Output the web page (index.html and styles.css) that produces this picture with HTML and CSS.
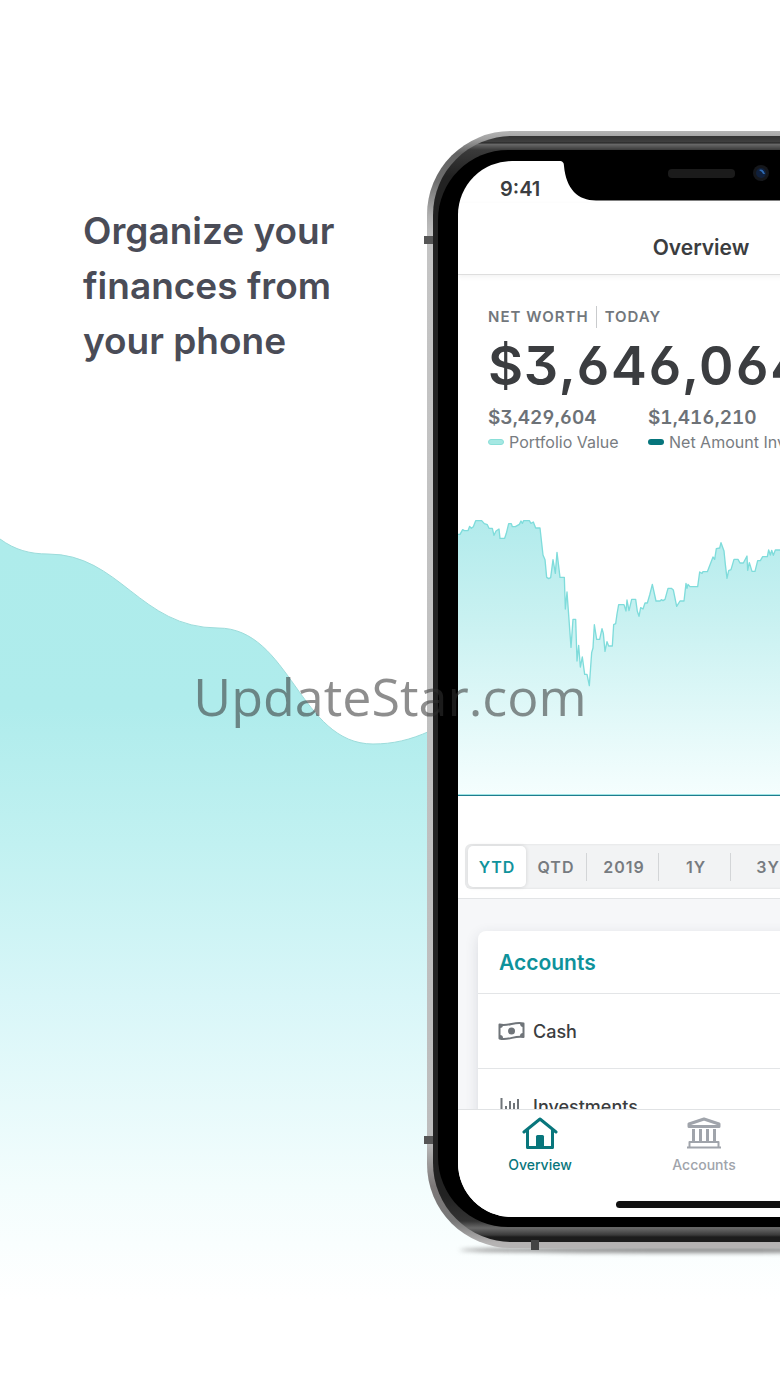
FILE: index.html
```html
<!DOCTYPE html>
<html lang="en">
<head>
    <meta charset="utf-8" />
    <meta name="viewport" content="width=device-width, initial-scale=1" />
    <title>Organize your finances from your phone</title>
    <link rel="stylesheet" href="styles.css">
</head>
<body>
    <main class="page">
        <svg class="wave" viewBox="0 0 780 1387" preserveAspectRatio="xMinYMin slice" aria-hidden="true">
            <defs>
                <linearGradient id="wavefill" gradientUnits="userSpaceOnUse" x1="0" y1="540" x2="0" y2="1300">
                    <stop offset="0" stop-color="#aeeceb" />
                    <stop offset="0.22" stop-color="#afecec" />
                    <stop offset="0.4" stop-color="#c1f1f1" />
                    <stop offset="0.6" stop-color="#d8f6f8" />
                    <stop offset="0.85" stop-color="#f3fdfd" />
                    <stop offset="1" stop-color="#ffffff" />
                </linearGradient>
            </defs>
            <path d="M0 539C15 550 30 554 48 554C120 554 140 628 218 628C290 628 300 744 373 744C393 744 410 740 430 731C500 700 600 640 780 640V1387H0Z" fill="url(#wavefill)" />
            <path d="M0 539C15 550 30 554 48 554C120 554 140 628 218 628C290 628 300 744 373 744C393 744 410 740 430 731" fill="none" stroke="#9ddcdb" stroke-width="1" />
        </svg>

        <div class="content">
            <h1 class="headline">Organize your<br>finances from<br>your phone</h1>

            <div class="device">
                <span class="band band-top"></span>
                <span class="band band-side"></span>
                <span class="band band-bottom"></span>
                <div class="rim">
                    <div class="edge">
                        <div class="bezel">
                            <div class="screen">
                                <svg class="notch" viewBox="0 0 284 40" aria-hidden="true">
                                    <path d="M0 0H284C280 0 279 2 279 5C277 28 265 39.500 247 39.500H37C19 39.500 7 28 5 5C5 2 4 0 0 0Z" fill="#000" />
                                    <rect x="109" y="8" width="67" height="9" rx="4" fill="#1b1b1b" />
                                    <circle cx="202" cy="12" r="8" fill="#15171b" />
                                    <circle cx="202" cy="12" r="5" fill="#10203c" />
                                    <path d="M200 9Q204 7 206 13Q203 13 203 11Z" fill="#2f6cb5" />
                                </svg>
                                <div class="status">9:41</div>
                                <header class="titlebar">
                                    <h2>Overview</h2>
                                </header>

                                <div class="scroll">
                                    <section class="summary">
                                        <div class="caption"><span>NET WORTH</span><span class="today">TODAY</span></div>
                                        <div class="total">$3,646,064</div>
                                        <div class="figures">
                                            <div class="figure">
                                                <strong>$3,429,604</strong>
                                                <span class="legend"><i class="key key-light"></i>Portfolio Value</span>
                                            </div>
                                            <div class="figure">
                                                <strong>$1,416,210</strong>
                                                <span class="legend"><i class="key key-dark"></i>Net Amount Invested</span>
                                            </div>
                                        </div>
                                    </section>

                                    <svg class="chart" viewBox="24 45 1458 840" aria-hidden="true">
                                        <defs>
                                            <linearGradient id="chartfill" x1="0" y1="0" x2="0" y2="1">
                                                <stop offset="0" stop-color="#b2ebec" />
                                                <stop offset="0.35" stop-color="#c8f1f1" />
                                                <stop offset="1" stop-color="#f5fefe" />
                                            </linearGradient>
                                        </defs>
                                        <path d="M20 103H30L38 89L43 92H54L59 79L64 85L70 80L77 62H95L103 71L112 74L117 85H127L132 106L138 93L147 87L150 115H164L169 100L176 71H184L187 80H196L208 73L213 63L217 70L221 62H238L243 70L250 66L257 84H270L279 165L285 179L290 232L296 236L302 233L309 179L316 220L321 157L330 232H343L346 327L351 276L363 442L369 358H377L381 483L386 436L391 501L397 471L404 523H411L418 557L425 458L429 444L433 374L440 418H449L456 386L460 400L465 454L471 425L476 438H487L491 374L497 371L501 342L506 314H522L528 333L531 300L537 332L545 298H557L562 334L567 349L572 323L579 327L585 309H592L599 285L607 253L618 303H630L634 299L639 302L645 298L654 265H664L670 270L680 319L690 303H702L708 250L711 265L714 253L720 260H743L749 216L756 220L759 215H772L789 171L794 178L799 146L809 144L813 128L822 153L826 193L831 235L836 212L843 209L852 178H864L870 189H880L891 168L893 211L898 188L906 214H915L923 182H931L938 170H952L956 150L961 165L965 151L970 166L976 150H990L1000 160L1020 130L1040 150L1070 120L1100 140L1140 100L1180 125L1230 95L1280 110L1340 80L1400 95L1490 70V885H20Z" fill="url(#chartfill)" stroke="#7fdcdb" stroke-width="4" stroke-linejoin="round" />
                                    </svg>

                                    <nav class="ranges" aria-label="Time range">
                                        <button type="button" class="range active">YTD</button>
                                        <button type="button" class="range">QTD</button>
                                        <button type="button" class="range wide">2019</button>
                                        <button type="button" class="range wide">1Y</button>
                                        <button type="button" class="range wide">3Y</button>
                                    </nav>

                                    <section class="lower">
                                        <div class="card">
                                            <h3>Accounts</h3>
                                            <div class="row">
                                                <svg width="27" height="20" viewBox="0 0 27 20" aria-hidden="true">
                                                    <path d="M1.500 3.500C10 6 17 0 25.500 2.500V16C17 14 10 20 1.500 17.500Z" fill="none" stroke="#6f7479" stroke-width="2" stroke-linejoin="round" />
                                                    <path d="M2 4H5Q5 7 2 7ZM2 14Q5 14 5 17H2ZM25 2H22Q22 6 25 6ZM25 12Q22 12 22 15H25Z" fill="#6f7479" />
                                                    <circle cx="13.500" cy="10" r="3.500" fill="#6f7479" />
                                                </svg>
                                                Cash
                                            </div>
                                            <div class="row">
                                                <svg width="27" height="20" viewBox="0 0 27 20" aria-hidden="true">
                                                    <path d="M3.500 2V18H21M8 10V16M12 5V16M16 7V16M20 3V16" fill="none" stroke="#6f7479" stroke-width="2" />
                                                </svg>
                                                Investments
                                            </div>
                                        </div>
                                    </section>
                                </div>

                                <nav class="tabs" aria-label="Sections">
                                    <a href="#overview" class="tab current">
                                        <svg width="36" height="34" viewBox="0 0 36 34" aria-hidden="true">
                                            <path d="M2 16L18 3L34 16M5.500 14V31.500H30.500V14" fill="none" stroke="currentColor" stroke-width="3" stroke-linecap="round" stroke-linejoin="round" />
                                            <path d="M14 31V20.500Q14 19 15.500 19H20.500Q22 19 22 20.500V31Z" fill="currentColor" />
                                        </svg>
                                        Overview
                                    </a>
                                    <a href="#accounts" class="tab">
                                        <svg width="36" height="34" viewBox="0 0 36 34" aria-hidden="true">
                                            <path d="M3 10.500V8L18 3L33 8V10.500Z" fill="none" stroke="currentColor" stroke-width="3" stroke-linejoin="round" />
                                            <path d="M7.500 13V25.500M14.500 13V25.500M21.500 13V25.500M28.500 13V25.500" stroke="currentColor" stroke-width="3" />
                                            <path d="M3.500 31V26H32.500V31M1 31.500H35" fill="none" stroke="currentColor" stroke-width="2" stroke-linejoin="round" />
                                        </svg>
                                        Accounts
                                    </a>
                                </nav>
                                <div class="homebar"></div>
                            </div>
                        </div>
                    </div>
                </div>
            </div>
        </div>

        <div class="watermark">UpdateStar.com</div>
    </main>
</body>
</html>
```

FILE: styles.css
```css
*{
    box-sizing:border-box;
}
body{
    margin:0;
    background-color:white;
    font-family:Inter, "Liberation Sans", sans-serif;
    color:#3b3d40;
}
h1,h2,h3{
    margin:0;
    font-weight:600;
}
/* backdrop, content and watermark share one grid cell */
.page{
    display:grid;
    grid-template-columns:minmax(0, 1fr);
    overflow:hidden;
}
.wave,.content,.watermark{
    grid-area:1 / 1;
}
.wave{
    width:100%;
    height:100%;
}
.content{
    display:grid;
    grid-template-columns:427px minmax(0, 1fr);
    align-items:start;
    padding:131px 0 139px;
    isolation:isolate;
}
.headline{
    padding:72px 0 0 83px;
    font-size:37px;
    line-height:55px;
    color:#4a4c57;
}
.watermark{
    place-self:center;
    z-index:1;
    padding-top:4px;
    font:52px/72px "Open Sans", "Noto Sans", sans-serif;
    color:rgba(50,50,50,0.55);
    pointer-events:none;
}

/* phone body */
.device{
    position:relative;
    width:548px;
}
.device::after{
    content:"";
    position:absolute;
    left:32px;
    right:32px;
    bottom:-5px;
    height:6px;
    border-radius:50%;
    background-color:#8c8c8c;
    filter:blur(2px);
    z-index:-1;
}
.rim{
    padding:5px 6px 6px;
    border-radius:84px;
    background:linear-gradient(#b4b4b4, #a0a0a0 8px, #636363 22px, #6e6e6e 50px, #b0b0b0 85px, #c4c4c4 110px, #bdbdbd 1010px, #7c7878 1055px, #777 1090px, #b5b3b3 1112px);
}
.edge{
    padding:14px 5px 15px;
    border-radius:79px;
    background:linear-gradient(#333, #3f3f3f 6px, #222 7px, #6a6a6a 8px, #3a3a3a 14px, #222 40px, #222 1060px, #333 1085px, #6a6a6a 1092px, #3a3a3a 1099px, #1c1c1c 1101px);
}
.bezel{
    padding:11px 20px 10px;
    border-radius:70px;
    background-color:black;
}
.band{
    position:absolute;
    background-color:#555;
}
.band-top,.band-side{
    left:-3px;
    width:9px;
    height:8px;
}
.band-top{
    top:105px;
}
.band-side{
    top:1005px;
}
.band-bottom{
    left:104px;
    bottom:-2px;
    width:8px;
    height:10px;
    background-color:#444;
    z-index:1;
}

/* screen */
.screen{
    position:relative;
    display:flex;
    flex-direction:column;
    aspect-ratio:486 / 1056;
    border-radius:54px;
    background-color:white;
    overflow:hidden;
}
.notch{
    position:absolute;
    top:0;
    left:101px;
    width:284px;
    height:40px;
}
.status{
    padding:14px 42px 0;
    font-size:20px;
    font-weight:600;
    line-height:28px;
}
.titlebar{
    padding:30px 0 12px;
    text-align:center;
    border-bottom:1px solid #dedede;
    box-shadow:0 2px 5px rgba(0,0,0,0.05);
}
.titlebar h2{
    font-size:21px;
    line-height:29px;
}
.scroll{
    flex:1;
    min-height:0;
    overflow:hidden;
}
.summary{
    padding:31px 0 0 30px;
}
.caption{
    display:flex;
    font-size:15px;
    font-weight:600;
    line-height:22px;
    letter-spacing:1px;
    color:#72777c;
}
.today{
    margin-left:7px;
    padding-left:8px;
    border-left:1px solid #c9cbcd;
}
.total,.figure strong{
    font-weight:600;
    font-feature-settings:"cv03","cv04","cv09","tnum";
}
.total{
    font-size:54px;
    line-height:76px;
    letter-spacing:1px;
}
.figures{
    display:flex;
    white-space:nowrap;
}
.figure{
    flex:0 0 160px;
    display:flex;
    flex-direction:column;
}
.figure strong{
    font-size:19px;
    line-height:28px;
    color:#6d7277;
}
.legend{
    display:flex;
    align-items:center;
    gap:5px;
    font-size:16px;
    line-height:20px;
    color:#787c81;
}
.key{
    width:16px;
    height:6px;
    border-radius:3px;
}
.key-light{
    background-color:#a5e8e3;
    border:1px solid #8adfd8;
}
.key-dark{
    background-color:#06757c;
}
.chart{
    display:block;
    width:100%;
    margin-top:63px;
    border-bottom:1px solid #207c8e;
}
.ranges{
    display:flex;
    margin:48px 0 9px 7px;
    padding:2px 3px;
    border-radius:6px;
    background-color:#f2f3f4;
    box-shadow:inset 0 0 3px rgba(0,0,0,0.09);
}
.range{
    flex:0 0 60px;
    height:41px;
    padding:0;
    border:0;
    background:none;
    font:600 16px/40px Inter, "Liberation Sans", sans-serif;
    letter-spacing:1px;
    color:#777b80;
}
.range.wide{
    flex-basis:72px;
    padding-left:4px;
    background:linear-gradient(#d3d5d7, #d3d5d7) left center / 1px 28px no-repeat;
}
.range.active{
    flex-basis:58px;
    border-radius:5px;
    background-color:white;
    box-shadow:0 0 4px rgba(0,0,0,0.14);
    color:#10939c;
}
.lower{
    padding:32px 0 0 20px;
    border-top:1px solid #e2e4e6;
    background-color:#f6f7f9;
}
.card{
    border-radius:8px 0 0 0;
    background-color:white;
    box-shadow:0 4px 14px rgba(40,50,70,0.14);
}
.card h3{
    padding:17px 21px 15px;
    font-size:21px;
    line-height:30px;
    color:#0e929b;
}
.row{
    display:flex;
    align-items:center;
    gap:8px;
    height:75px;
    padding-left:20px;
    border-top:1px solid #e3e5e7;
    font-size:18px;
    font-weight:500;
}
.tabs{
    display:flex;
    height:108px;
    padding-top:6px;
    border-top:1px solid #e0e2e4;
    background-color:white;
}
.tab{
    flex:0 0 164px;
    display:flex;
    flex-direction:column;
    align-items:center;
    gap:6px;
    font-size:14px;
    font-weight:500;
    line-height:18px;
    color:#a0a4ab;
    text-decoration:none;
}
.tab.current{
    color:#08767c;
}
.homebar{
    position:absolute;
    bottom:9px;
    left:50%;
    width:170px;
    height:7px;
    margin-left:-85px;
    border-radius:4px;
    background-color:#111;
}
```
